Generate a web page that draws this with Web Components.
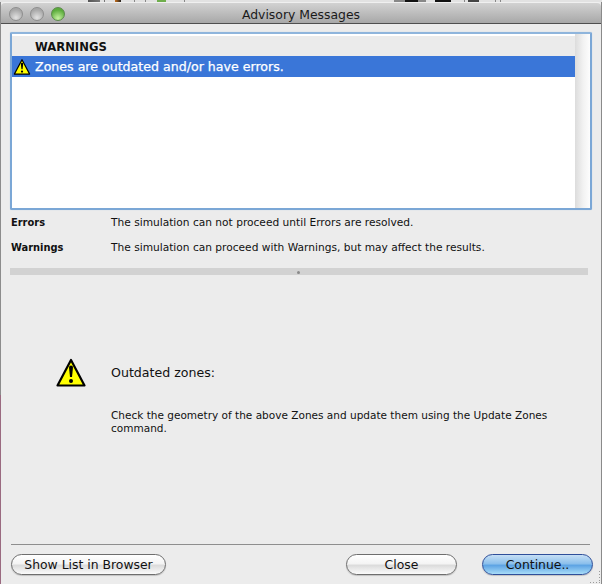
<!DOCTYPE html>
<html>
<head>
<meta charset="utf-8">
<title>Advisory Messages</title>
<style>
  html, body { margin: 0; padding: 0; background: #ececec; }
  body { font-family: "DejaVu Sans", sans-serif; font-size: 10.5px; color: #111; }
</style>
</head>
<body>
<advisory-window>
  <message-list>
    <list-row slot="rows" heading>WARNINGS</list-row>
    <list-row slot="rows" selected><warn-icon size="18" slot="icon"></warn-icon>Zones are outdated and/or have errors.</list-row>
  </message-list>
  <legend-row name="Errors">The simulation can not proceed until Errors are resolved.</legend-row>
  <legend-row name="Warnings">The simulation can proceed with Warnings, but may affect the results.</legend-row>
  <split-bar></split-bar>
  <detail-panel heading="Outdated zones:">Check the geometry of the above Zones and update them using the Update Zones command.</detail-panel>
  <button-bar>
    <mac-button slot="left" width="155">Show List in Browser</mac-button>
    <mac-button slot="right" width="111">Close</mac-button>
    <mac-button slot="right" width="111" primary>Continue..</mac-button>
  </button-bar>
</advisory-window>

<script>
class AdvisoryWindow extends HTMLElement {
  constructor() {
    super();
    this.attachShadow({ mode: 'open' }).innerHTML = `
      <style>
        :host {
          display: flex;
          flex-direction: column;
          box-sizing: border-box;
          width: 602px;
          height: 584px;
          padding: 0 1px;
          position: relative;
          background-color: #ececec;
          background-image:
            linear-gradient(#8c8c8c 395px, #9a6a80 395px),
            linear-gradient(#8a8a8a, #8a8a8a);
          background-size: 1px 100%, 1px 100%;
          background-position: left top, right top;
          background-repeat: no-repeat;
          overflow: hidden;
        }
        /* bits of the windows behind, showing above the title bar */
        .behind {
          flex: none;
          height: 2px;
          margin: 0 -1px;
          background: linear-gradient(90deg,
            #e2e2e2 88px, #555 88px, #777 100px, #e2e2e2 100px,
            #e2e2e2 104px, #777 104px, #777 105px, #e2e2e2 105px,
            #e2e2e2 115px, #c8701c 115px, #222 121px, #e2e2e2 121px,
            #e2e2e2 134px, #888 134px, #888 135px, #e2e2e2 135px,
            #e2e2e2 145px, #888 145px, #888 146px, #e2e2e2 146px,
            #e2e2e2 157px, #6fae4c 157px, #6fae4c 166px, #e2e2e2 166px,
            #e2e2e2 184px, #888 184px, #888 185px, #e2e2e2 185px,
            #e2e2e2 394px, #888 394px, #888 405px, #111 405px, #111 418px, #888 418px, #888 426px, #e2e2e2 426px,
            #e2e2e2 435px, #111 435px, #111 451px, #e2e2e2 451px,
            #e2e2e2 464px, #888 464px, #888 465px, #e2e2e2 465px,
            #e2e2e2 468px, #444 468px, #444 479px, #e2e2e2 479px,
            #e2e2e2 495px, #888 495px, #888 496px, #e2e2e2 496px,
            #e2e2e2 500px, #888 500px, #888 501px, #e2e2e2 501px);
        }
        .bar {
          flex: none;
          box-sizing: border-box;
          height: 22px;
          display: flex;
          align-items: center;
          position: relative;
          padding: 2px 0 0 8px;
          gap: 7px;
          background: linear-gradient(#d2d2d2, #a8a8a8);
          border-top: 1px solid #f0f0f0;
          border-bottom: 1px solid #4f4f4f;
          border-radius: 4px 4px 0 0;
        }
        .light {
          width: 14px;
          height: 14px;
          border-radius: 50%;
          box-sizing: border-box;
          border: 1px solid #8e8e8e;
          background: radial-gradient(circle at 50% 80%, #e2e2e2, #a8a8a8 70%);
        }
        .light.on {
          border-color: #5c8a4c;
          background: radial-gradient(circle at 50% 85%, #c6f2a0, #5cac3c 70%);
        }
        .title {
          position: absolute;
          left: 0;
          right: 0;
          text-align: center;
          font-size: 12.4px;
          color: #1a1a1a;
        }
        .body {
          flex: 1;
          display: flex;
          flex-direction: column;
          min-height: 0;
          padding: 8px 0 0 9px;
        }
        .grip { position: absolute; right: 1px; bottom: 0; display: block; }
      </style>
      <div class="behind"></div>
      <div class="bar">
        <span class="light"></span><span class="light"></span><span class="light on"></span>
        <span class="title">Advisory Messages</span>
      </div>
      <div class="body"><slot></slot></div>
      <svg class="grip" width="12" height="14" viewBox="0 0 12 14" fill="#9a9a9a">
        <rect x="10" y="1" width="1" height="1"/><rect x="10" y="4" width="1" height="1"/>
        <rect x="10" y="7" width="1" height="1"/><rect x="10" y="10" width="1" height="1"/>
        <rect x="1" y="12" width="1" height="1"/><rect x="4" y="12" width="1" height="1"/>
        <rect x="7" y="12" width="1" height="1"/><rect x="10" y="12" width="1" height="1"/>
      </svg>
    `;
  }
}

class MessageList extends HTMLElement {
  constructor() {
    super();
    this.attachShadow({ mode: 'open' }).innerHTML = `
      <style>
        :host {
          display: flex;
          flex: none;
          box-sizing: border-box;
          height: 178px;
          width: 582px;
          background: #fff;
          border: 2px solid #7ba7d6;
          border-top-color: #8fb5dc;
          border-radius: 2px;
          padding-top: 2px;
          box-shadow: 0 0 1px #a9c6e6;
        }
        .rows { flex: 1; display: flex; flex-direction: column; }
        .scroll {
          flex: none;
          width: 15px;
          margin-top: -2px;
          background: linear-gradient(90deg, #dcdcdc, #f2f2f2 55%, #fdfdfd);
        }
      </style>
      <div class="rows"><slot name="rows"></slot></div>
      <div class="scroll"></div>
    `;
  }
}

class ListRow extends HTMLElement {
  constructor() {
    super();
    this.attachShadow({ mode: 'open' }).innerHTML = `
      <style>
        :host {
          display: flex;
          align-items: center;
          box-sizing: border-box;
          height: 20px;
          padding-left: 23px;
          position: relative;
          font-size: 11.6px;
          background: #fff;
        }
        :host([heading]) {
          background: #ebebeb;
          font-weight: bold;
          color: #111;
          padding-top: 2px;
        }
        :host([selected]) {
          height: 21px;
          background: #3a76d8;
          color: #fff;
          font-weight: normal;
          font-size: 12.6px;
          -webkit-text-stroke: .25px #fff;
        }
        .icon { position: absolute; left: 1px; top: 2px; display: flex; }
      </style>
      <span class="icon"><slot name="icon"></slot></span>
      <span><slot></slot></span>
    `;
  }
}

class WarnIcon extends HTMLElement {
  connectedCallback() {
    const size = this.getAttribute('size') || 32;
    this.attachShadow({ mode: 'open' }).innerHTML = `
      <style>:host { display: inline-flex; } svg { display: block; }</style>
      <svg width="${size}" height="${size}" viewBox="0 0 32 32">
        <path d="M16 3 L29.5 28.5 H2.5 Z" fill="#ffff00" stroke="#000" stroke-width="2.2" stroke-linejoin="round"/>
        <path d="M14 10.5 a2 2 0 0 1 4 0 l-1 9.5 h-2 z" fill="#000"/>
        <circle cx="16" cy="24" r="2" fill="#000"/>
      </svg>
    `;
  }
}

class LegendRow extends HTMLElement {
  connectedCallback() {
    this.attachShadow({ mode: 'open' }).innerHTML = `
      <style>
        :host {
          display: flex;
          flex: none;
          align-items: center;
          height: 25px;
          font-size: 10.63px;
          padding-left: 1px;
        }
        b { width: 100px; flex: none; font-weight: bold; font-size: 9.9px; }
      </style>
      <b>${this.getAttribute('name')}</b>
      <span><slot></slot></span>
    `;
  }
}

class SplitBar extends HTMLElement {
  constructor() {
    super();
    this.attachShadow({ mode: 'open' }).innerHTML = `
      <style>
        :host {
          display: block;
          flex: none;
          height: 7px;
          width: 578px;
          margin-top: 8px;
          background: #d2d2d2;
          position: relative;
        }
        i {
          position: absolute;
          left: 287px;
          top: 3px;
          width: 3px;
          height: 3px;
          border-radius: 50%;
          background: #8a8a8a;
        }
      </style>
      <i></i>
    `;
  }
}

class DetailPanel extends HTMLElement {
  connectedCallback() {
    this.attachShadow({ mode: 'open' }).innerHTML = `
      <style>
        :host {
          display: flex;
          flex: 1;
          min-height: 0;
          padding: 81px 0 0 45px;
        }
        .icon { flex: none; width: 56px; margin-top: 1px; }
        h2 {
          margin: 9px 0 0;
          font-size: 12.6px;
          font-weight: normal;
          line-height: 16px;
        }
        p {
          margin: 28px 0 0;
          font-size: 10.52px;
          line-height: 13px;
          width: 460px;
        }
      </style>
      <div class="icon"><warn-icon size="32"></warn-icon></div>
      <div>
        <h2>${this.getAttribute('heading')}</h2>
        <p><slot></slot></p>
      </div>
    `;
  }
}

class ButtonBar extends HTMLElement {
  constructor() {
    super();
    this.attachShadow({ mode: 'open' }).innerHTML = `
      <style>
        :host {
          display: flex;
          flex: none;
          justify-content: space-between;
          align-items: center;
          box-sizing: border-box;
          width: 579px;
          height: 40px;
          margin-left: 1px;
          border-top: 1px solid #8e8e8e;
          padding: 9px 0;
        }
        .group { display: flex; gap: 25px; margin-right: -3px; }
      </style>
      <slot name="left"></slot>
      <div class="group"><slot name="right"></slot></div>
    `;
  }
}

class MacButton extends HTMLElement {
  connectedCallback() {
    this.attachShadow({ mode: 'open' }).innerHTML = `
      <style>
        :host {
          display: inline-flex;
          align-items: center;
          justify-content: center;
          box-sizing: border-box;
          width: ${this.getAttribute('width')}px;
          height: 21px;
          border-radius: 11px;
          border: 1px solid #6e6e6e;
          font-size: 12.4px;
          color: #111;
          background: linear-gradient(#ffffff 0%, #f4f4f4 45%, #dcdcdc 55%, #fbfbfb 100%);
          box-shadow: 0 1px 1px rgba(0, 0, 0, .18);
        }
        :host([primary]) {
          border-color: #2f4f9a;
          background: linear-gradient(#c6dff5 0%, #8cc0ec 45%, #5ea4e4 55%, #a8dcf8 100%);
        }
      </style>
      <slot></slot>
    `;
  }
}

customElements.define('warn-icon', WarnIcon);
customElements.define('advisory-window', AdvisoryWindow);
customElements.define('message-list', MessageList);
customElements.define('list-row', ListRow);
customElements.define('legend-row', LegendRow);
customElements.define('split-bar', SplitBar);
customElements.define('detail-panel', DetailPanel);
customElements.define('button-bar', ButtonBar);
customElements.define('mac-button', MacButton);
</script>
</body>
</html>
